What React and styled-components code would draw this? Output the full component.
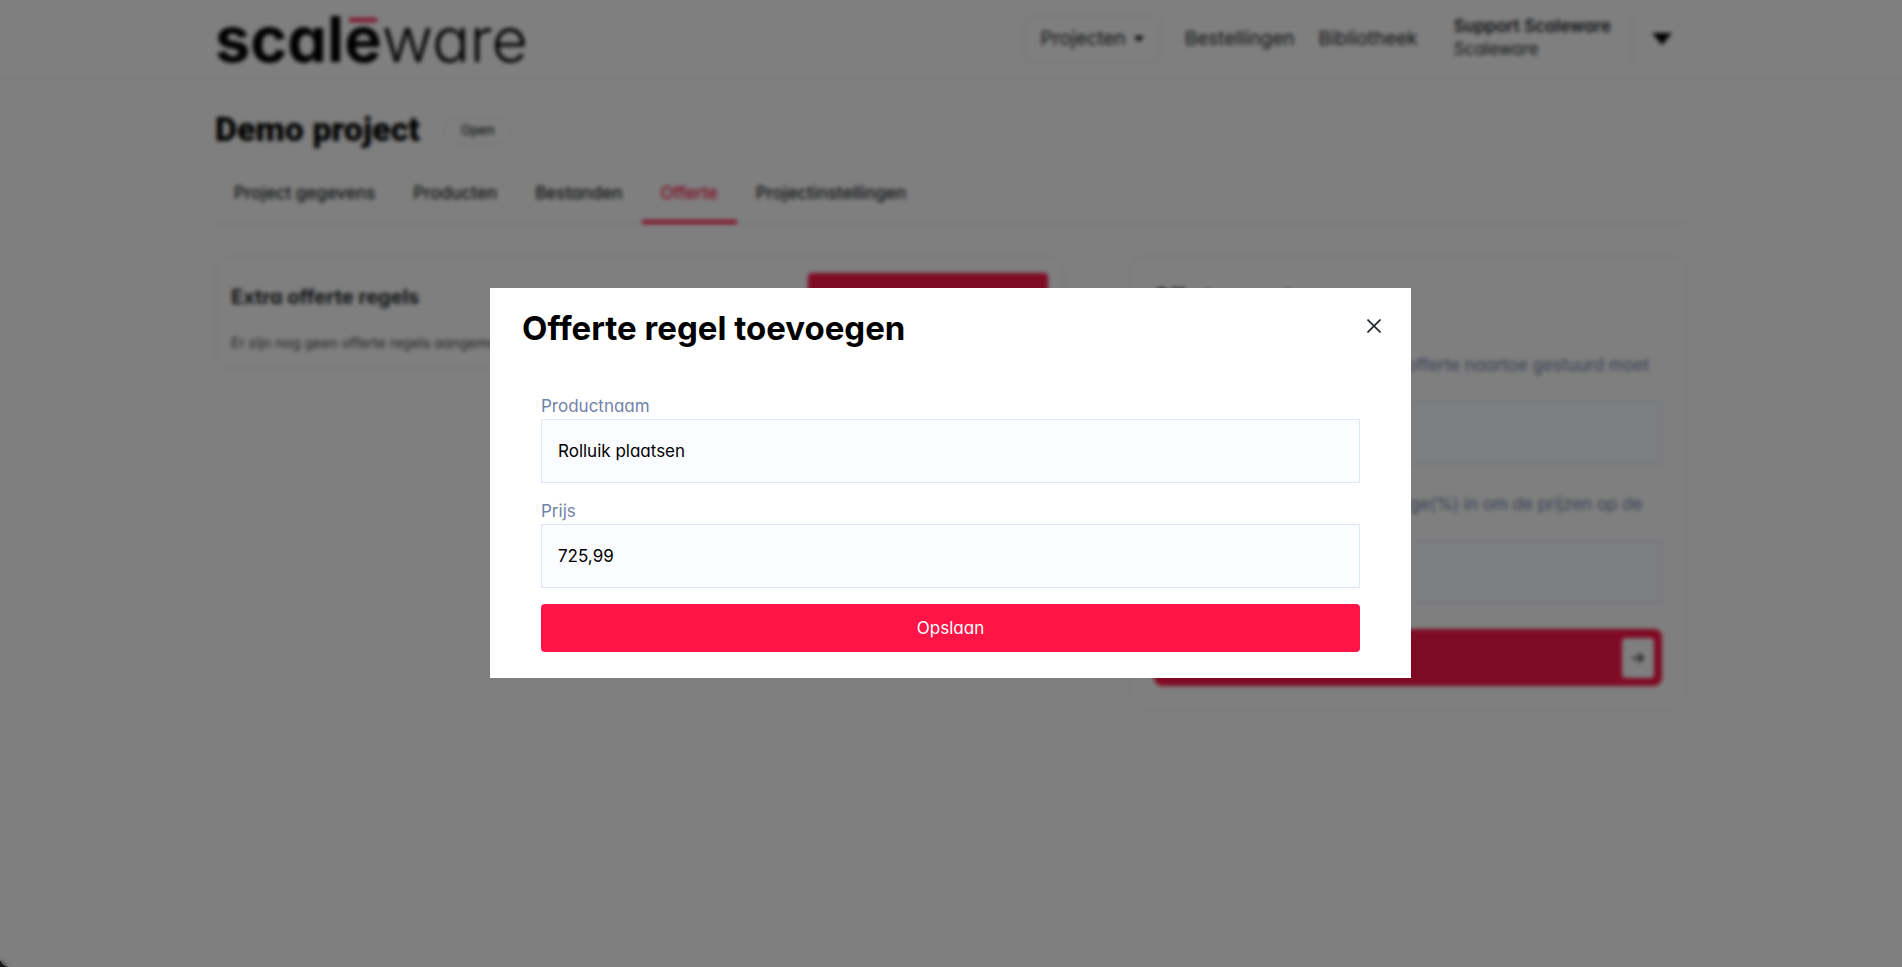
import React from "react";
import styled, { createGlobalStyle, css } from "styled-components";

const GlobalStyle = createGlobalStyle`
  *, *::before, *::after { box-sizing: border-box; }
  html { background: #141616; }
  body {
    margin: 0;
    font-family: Inter, "Open Sans", sans-serif;
    font-feature-settings: "cv11";
    font-size: 17px;
    line-height: 24px;
    color: #212529;
  }
  button, input { font: inherit; font-feature-settings: inherit; color: inherit; }
  h1, h2, p { margin: 0; }
  a { color: inherit; text-decoration: none; }
`;

const Shell = styled.div`
  position: relative;
  min-height: 100vh;
  overflow: hidden;
  border-bottom-left-radius: 10px;
  background: #fff;
`;

const Container = styled.div`
  width: 100%;
  max-width: 1504px;
  margin: 0 auto;
  padding: 0 16px;
`;

const Header = styled.header`
  border-bottom: 1px solid #e6e6e6;
`;

const HeaderRow = styled(Container)`
  display: flex;
  align-items: center;
  justify-content: space-between;
  height: 78px;
`;

const Logo = styled.a`
  display: flex;
  font-size: 63px;
  line-height: 64px;
  font-weight: 300;
  color: #000;
`;

const LogoStrong = styled.span`
  font-weight: 700;
`;

const LogoAccent = styled.span`
  position: relative;

  &::after {
    content: "";
    position: absolute;
    top: 17px;
    left: 5px;
    right: 5px;
    height: 4px;
    background: #ff1447;
  }
`;

const HeaderRight = styled.div`
  display: flex;
  align-items: center;
  padding-right: 15px;
`;

const MainNav = styled.nav`
  display: flex;
  align-items: center;
  gap: 24px;
  font-size: 19px;
`;

const ProjectMenu = styled.button`
  display: flex;
  align-items: center;
  gap: 8px;
  height: 46px;
  padding: 0 16px;
  border: 1px solid #e6e6e6;
  border-radius: 6px;
  background: none;
`;

const Account = styled.div`
  display: flex;
  flex-direction: column;
  margin-left: 36px;
  padding: 0 20px 3px 0;
  border-right: 1px solid #e6e6e6;
  line-height: 23px;
`;

const AccountName = styled.strong`
  font-weight: 600;
`;

const AccountToggle = styled.button`
  display: flex;
  margin-left: 20px;
  padding: 0;
  border: 0;
  background: none;
`;

const TitleRow = styled.div`
  display: flex;
  align-items: center;
  gap: 24px;
  padding-top: 30px;
`;

const PageTitle = styled.h1`
  font-family: Roboto, sans-serif;
  font-size: 34px;
  line-height: 40px;
  font-weight: 900;
  color: #000;
`;

const Badge = styled.span`
  margin-top: 3px;
  padding: 0 16px;
  border: 1px solid #e6e6e6;
  border-radius: 14px;
  font-size: 13px;
  line-height: 25px;
  font-weight: 500;
`;

const Tabs = styled.nav`
  display: flex;
  margin-top: 8px;
  border-bottom: 1px solid #e6e6e6;
`;

const Tab = styled.a`
  padding: 24px 19px 15px;
  margin-bottom: -1px;
  border-bottom: 4px solid transparent;
  font-weight: 500;
  ${(p) =>
    p.$active &&
    css`
      color: #ff1447;
      border-bottom-color: #ff1447;
    `}
`;

const Columns = styled.main`
  display: grid;
  grid-template-columns: minmax(0, 849fr) minmax(0, 558fr);
  gap: 65px;
  align-items: start;
  margin-top: 32px;
`;

const Card = styled.section`
  padding: ${(p) => p.$padding};
  border: 1px solid #e6e6e6;
  border-radius: 16px;
`;

const CardHead = styled.div`
  display: flex;
  align-items: center;
  justify-content: space-between;
`;

const CardTitle = styled.h2`
  font-size: 20px;
  line-height: 30px;
  font-weight: 700;
  color: ${(p) => (p.$strong ? "#000" : "inherit")};
`;

const EmptyText = styled.p`
  margin-top: 10px;
  font-size: 14px;
  color: #4a4a4a;
`;

const PrimaryButton = styled.button`
  width: ${(p) => p.$width || "100%"};
  height: 48px;
  border: 0;
  border-radius: 4px;
  background: #ff1447;
  color: #fff;
`;

const Field = styled.div`
  display: flex;
  flex-direction: column;
  gap: ${(p) => p.$gap || "0"};
  margin-bottom: ${(p) => p.$space};
`;

const Label = styled.label`
  color: #7282a8;
`;

const Input = styled.input`
  width: 100%;
  height: 64px;
  padding: 0 16px;
  border: 1px solid #dde6fc;
  border-radius: 0;
  background: #fbfcff;
  color: #000;
  outline: none;
`;

const ExportFields = styled.div`
  padding-top: 42px;
`;

const ExportButton = styled.button`
  display: flex;
  align-items: center;
  justify-content: space-between;
  width: 100%;
  height: 57px;
  padding: 0 8px 0 20px;
  border: 0;
  border-radius: 8px;
  background: #ff1447;
  color: #fff;
`;

const ArrowBox = styled.span`
  display: grid;
  place-items: center;
  width: 32px;
  height: 40px;
  border-radius: 4px;
  background: #fff;
  color: #000;
`;

const Overlay = styled.div`
  position: fixed;
  inset: 0;
  display: grid;
  place-items: center;
  padding: 0 1px 1px 0;
  border-bottom-left-radius: 10px;
  background: rgba(0, 0, 0, 0.5);
  backdrop-filter: blur(2px);
`;

const Dialog = styled.div`
  width: calc(100% - 32px);
  max-width: 921px;
  background: #fff;
`;

const DialogHead = styled.div`
  display: flex;
  align-items: flex-start;
  justify-content: space-between;
  padding: 16px 30px 0 32px;
`;

const DialogTitle = styled.h2`
  font-size: 33px;
  line-height: 48px;
  font-weight: 700;
  color: #000;
`;

const CloseButton = styled.button`
  display: flex;
  padding: 15px 0;
  border: 0;
  background: none;
`;

const DialogForm = styled.form`
  padding: 42px 51px 26px;
`;

const Caret = ({ width, height }) => (
  <svg width={width} height={height} viewBox="0 0 20 12" preserveAspectRatio="none" aria-hidden="true">
    <path d="M0 0H20L10 12Z" fill="#000" />
  </svg>
);

const tabs = ["Project gegevens", "Producten", "Bestanden", "Offerte", "Projectinstellingen"];

export default function App() {
  return (
    <Shell>
      <GlobalStyle />
      <Header>
        <HeaderRow>
          <Logo href="#" aria-label="scaleware">
            <LogoStrong>
              scal<LogoAccent>e</LogoAccent>
            </LogoStrong>
            ware
          </Logo>
          <HeaderRight>
            <MainNav>
              <ProjectMenu type="button">
                Projecten
                <Caret width={10} height={6} />
              </ProjectMenu>
              <a href="#bestellingen">Bestellingen</a>
              <a href="#bibliotheek">Bibliotheek</a>
            </MainNav>
            <Account>
              <AccountName>Support Scaleware</AccountName>
              <span>Scaleware</span>
            </Account>
            <AccountToggle type="button" aria-label="Account">
              <Caret width={20} height={12} />
            </AccountToggle>
          </HeaderRight>
        </HeaderRow>
      </Header>

      <Container>
        <TitleRow>
          <PageTitle>Demo project</PageTitle>
          <Badge>Open</Badge>
        </TitleRow>
        <Tabs>
          {tabs.map((name) => (
            <Tab key={name} href="#" $active={name === "Offerte"}>
              {name}
            </Tab>
          ))}
        </Tabs>
        <Columns>
          <Card $padding="16px 15px 13px">
            <CardHead>
              <CardTitle>Extra offerte regels</CardTitle>
              <PrimaryButton type="button" $width="240px" aria-label="Regel toevoegen" />
            </CardHead>
            <EmptyText>Er zijn nog geen offerte regels aangemaakt</EmptyText>
          </Card>
          <Card $padding="24px">
            <CardTitle $strong>Offerte export</CardTitle>
            <ExportFields>
              <Field $space="27px">
                <Label htmlFor="email">
                  Vul het e-mailadres in waar de offerte naartoe gestuurd moet worden
                </Label>
                <Input id="email" type="email" />
              </Field>
              <Field $space="25px">
                <Label htmlFor="percentage">
                  Vul hier eventueel een percentage(%) in om de prijzen op de offerte te verhogen
                </Label>
                <Input id="percentage" type="text" />
              </Field>
            </ExportFields>
            <ExportButton type="button">
              Exporteren
              <ArrowBox>
                <svg width="12" height="12" viewBox="0 0 12 12" fill="none" stroke="currentColor" strokeWidth="1.5" aria-hidden="true">
                  <path d="M0 6H11M6.5 1.5L11 6L6.5 10.5" />
                </svg>
              </ArrowBox>
            </ExportButton>
          </Card>
        </Columns>
      </Container>

      <Overlay>
        <Dialog role="dialog" aria-modal="true" aria-labelledby="dialog-title">
          <DialogHead>
            <DialogTitle id="dialog-title">Offerte regel toevoegen</DialogTitle>
            <CloseButton type="button" aria-label="Sluiten">
              <svg width="14" height="14" viewBox="0 0 14 14" stroke="#212529" strokeWidth="1.6" aria-hidden="true">
                <path d="M0.5 0.5L13.5 13.5M13.5 0.5L0.5 13.5" />
              </svg>
            </CloseButton>
          </DialogHead>
          <DialogForm onSubmit={(e) => e.preventDefault()}>
            <Field $gap="1px" $space="16px">
              <Label htmlFor="productnaam">Productnaam</Label>
              <Input id="productnaam" type="text" defaultValue="Rolluik plaatsen" />
            </Field>
            <Field $gap="1px" $space="16px">
              <Label htmlFor="prijs">Prijs</Label>
              <Input id="prijs" type="text" defaultValue="725,99" />
            </Field>
            <PrimaryButton type="submit">Opslaan</PrimaryButton>
          </DialogForm>
        </Dialog>
      </Overlay>
    </Shell>
  );
}
